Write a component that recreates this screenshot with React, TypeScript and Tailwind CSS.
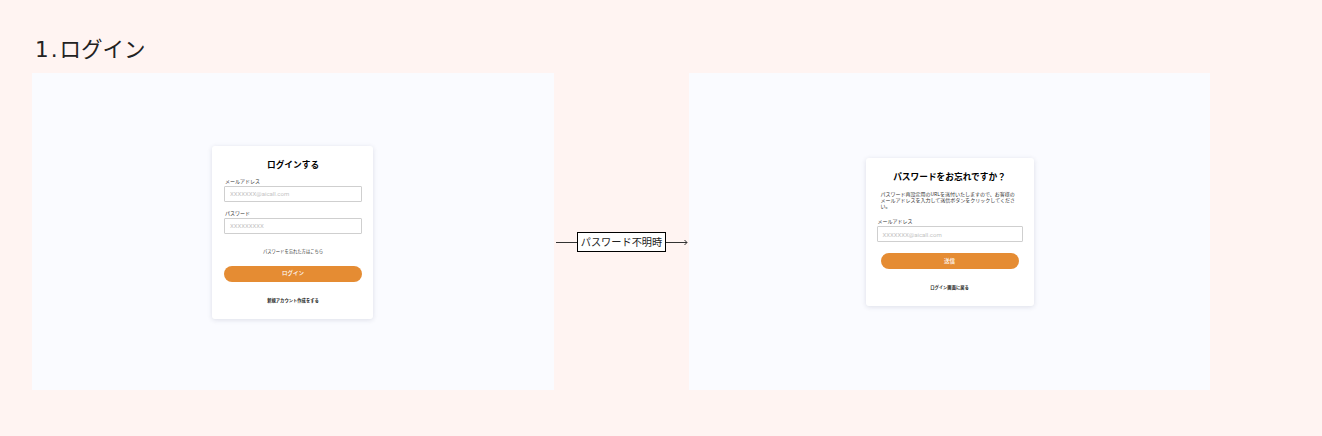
const jp = "font-['Noto_Sans_CJK_JP','Noto_Sans',sans-serif]";

function Field({ label, placeholder, className }: { label: string; placeholder: string; className?: string }) {
  return (
    <div className={className}>
      <div className="pl-[1px] text-[5px] leading-[6px] text-[#333]">{label}</div>
      <div className="mt-[2px] h-[16px] border border-[#cfcfcf] bg-white rounded-[1px] flex items-center pl-[5px] text-[6px] text-[#c4c4c4] font-['Roboto',sans-serif]">
        {placeholder}
      </div>
    </div>
  );
}

function LoginCard() {
  return (
    <div className="w-[161px] h-[173px] bg-white rounded-[3px] shadow-[0_1px_5px_rgba(40,50,90,0.14)] pl-[12px] pr-[11px] pt-[12px] flex flex-col">
      <h2 className="text-[8.7px] leading-[13px] font-bold text-black text-center">ログインする</h2>
      <Field label="メールアドレス" placeholder="XXXXXXX@aicall.com" className="mt-[7px]" />
      <Field label="パスワード" placeholder="XXXXXXXXX" className="mt-[8px]" />
      <div className="mt-[14px] text-[4.3px] leading-[7px] text-[#333] text-center">パスワードを忘れた方はこちら</div>
      <div className="mt-[11px] h-[16px] rounded-full bg-[#e58c33] flex items-center justify-center text-[5.5px] font-medium text-white">ログイン</div>
      <div className="mt-[15px] text-[4.3px] leading-[7px] font-bold text-[#222] text-center">新規アカウント作成をする</div>
    </div>
  );
}

function ResetCard() {
  return (
    <div className="w-[168px] h-[148px] bg-white rounded-[3px] shadow-[0_1px_5px_rgba(40,50,90,0.14)] px-[11px] pt-[12px] flex flex-col">
      <h2 className="text-[8.7px] leading-[13px] font-bold text-black text-center">パスワードをお忘れですか？</h2>
      <p className="mt-[8px] px-[4px] text-[5px] leading-[6px] text-[#333]">
        パスワード再設定用のURLを送付いたしますので、お客様のメールアドレスを入力して送信ボタンをクリックしてください。
      </p>
      <Field label="メールアドレス" placeholder="XXXXXXX@aicall.com" className="mt-[9px]" />
      <div className="mt-[11px] mx-[4px] h-[16px] rounded-full bg-[#e58c33] flex items-center justify-center text-[5.5px] font-medium text-white">送信</div>
      <div className="mt-[15px] text-[4.3px] leading-[7px] font-bold text-[#222] text-center">ログイン画面に戻る</div>
    </div>
  );
}

function Connector() {
  return (
    <div className="w-[135px] flex items-center pl-[2px] pt-[21px]">
      <div className="w-[21px] h-px bg-[#333] shrink-0" />
      <div className="w-[89px] h-[20px] shrink-0 border border-black bg-white flex items-center justify-center text-[10.2px] text-[#222] whitespace-nowrap">
        パスワード不明時
      </div>
      <svg width="22" height="7" viewBox="0 0 22 7" fill="none" className="block shrink-0">
        <path d="M0 3.5H21M18.5 1L21 3.5L18.5 6" stroke="#333" strokeWidth="1" />
      </svg>
    </div>
  );
}

export default function App() {
  return (
    <div className={`w-[1322px] h-[436px] bg-[#fff4f2] pl-[32px] pt-[34px] overflow-hidden ${jp}`}>
      <h1 className="h-[39px] pl-[3px] text-[21.5px] leading-[32px] text-[#222] font-['DejaVu_Sans','Noto_Sans_CJK_JP',sans-serif]">
        <span className="tracking-[2px]">1.</span>ログイン
      </h1>
      <div className="flex">
        <div className="w-[522px] h-[317px] bg-[#fafbff] flex items-center justify-center pt-[1px] pr-[1px]">
          <LoginCard />
        </div>
        <Connector />
        <div className="w-[521px] h-[317px] bg-[#fafbff] flex items-center justify-center pt-[1px]">
          <ResetCard />
        </div>
      </div>
    </div>
  );
}
